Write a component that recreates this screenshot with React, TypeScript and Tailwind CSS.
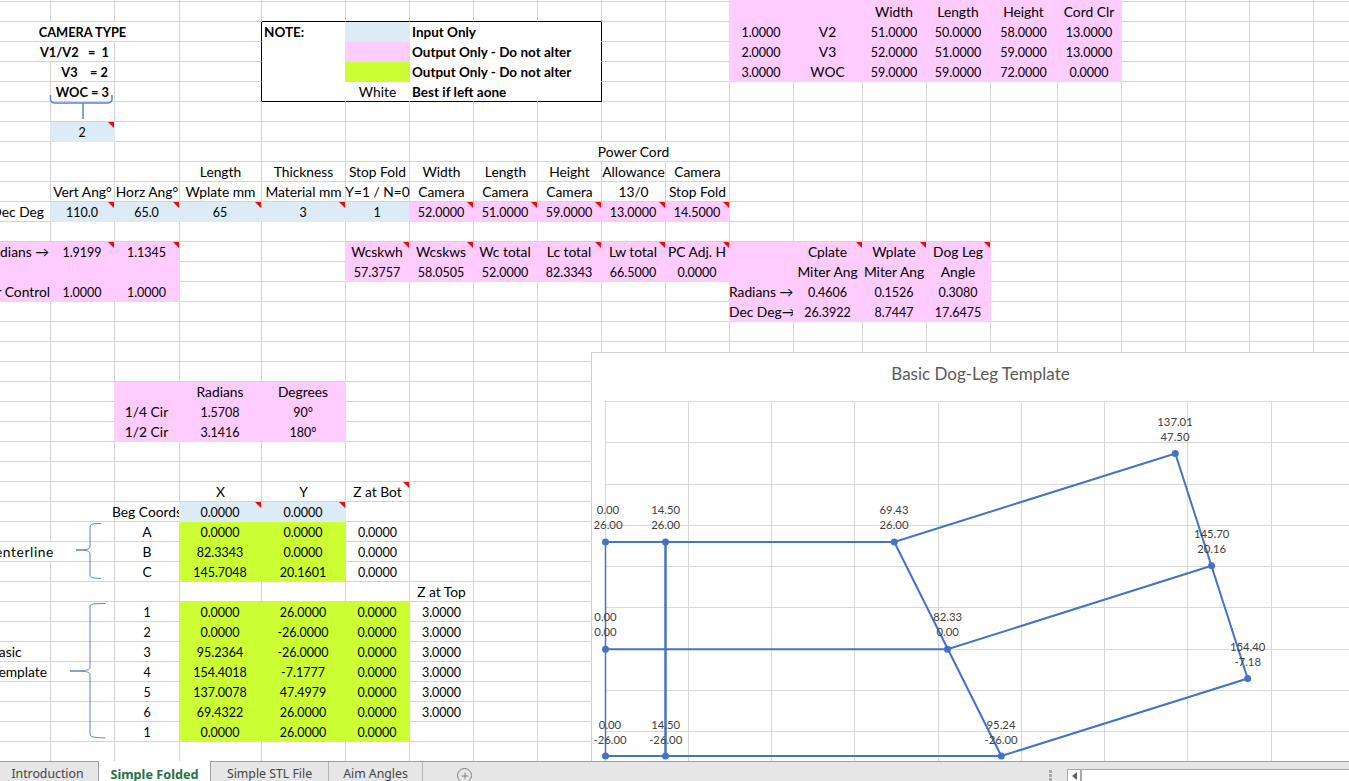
import { Plus } from 'lucide-react';

type Fill = 'pink' | 'blue' | 'lime';
type Cell = { t?: string; fill?: Fill; tri?: boolean; cls?: string };

const fills: Record<Fill, string> = {
  pink: 'bg-[#ffccff] border-r-transparent border-b-transparent -ml-px',
  blue: 'bg-[#ddebf7] border-r-transparent border-b-transparent -ml-px',
  lime: 'bg-[#ccff33] border-r-transparent border-b-transparent -ml-px',
};

const COLS = 21;
const sheet: Record<string, Cell> = {};

// writes values left to right from (r, c), null leaves the cell blank but still gets the options
function put(r: number, c: number, vals: (string | null)[], opt: Omit<Cell, 't'> = {}) {
  vals.forEach((v, i) => {
    sheet[`${r}:${c + i}`] = { ...opt, t: v ?? undefined };
  });
}
function patch(r: number, c: number, opt: Cell) {
  sheet[`${r}:${c}`] = { ...sheet[`${r}:${c}`], ...opt };
}

// camera table, top right
put(-1, 11, [null, null, null, null, null, null], { fill: 'pink' });
put(0, 11, [null, null, 'Width', 'Length', 'Height', 'Cord Clr'], { fill: 'pink' });
put(1, 11, ['1.0000', 'V2', '51.0000', '50.0000', '58.0000', '13.0000'], { fill: 'pink' });
put(2, 11, ['2.0000', 'V3', '52.0000', '51.0000', '59.0000', '13.0000'], { fill: 'pink' });
put(3, 11, ['3.0000', 'WOC', '59.0000', '59.0000', '72.0000', '0.0000'], { fill: 'pink' });

// camera type
put(1, 1, ['CAMERA TYPE'], { cls: 'font-bold text-[12.8px]' });
patch(1, 0, { cls: 'border-r-transparent' });
patch(1, 1, { cls: 'font-bold text-[12.8px] border-r-transparent' });
patch(2, 0, { cls: 'border-r-transparent' });
put(2, 1, ['V1/V2   =  1'], { cls: 'font-bold text-[12.8px] justify-end pr-[5px]' });
put(3, 1, ['V3    = 2'], { cls: 'font-bold text-[12.8px] justify-end pr-[6px]' });
put(4, 1, ['WOC = 3'], { cls: 'font-bold text-[12.8px] justify-end pr-[5px]' });
put(6, 1, ['2'], { fill: 'blue', tri: true });

// note box, black outline sits on the neighbouring cells' borders
for (let c = 4; c <= 8; c++) {
  put(0, c, [null], { cls: 'border-b-black' });
  for (let r = 1; r <= 4; r++) {
    const bottom = r === 4 ? 'border-b-black' : 'border-b-transparent';
    const right = c === 8 ? 'border-r-black' : 'border-r-transparent';
    put(r, c, [null], { cls: `${bottom} ${right}` });
  }
}
for (let r = 1; r <= 4; r++) put(r, 3, [null], { cls: 'border-r-black' });
put(1, 4, ['NOTE:'], { cls: 'font-bold text-[13.5px] justify-start pl-[2px] border-b-transparent border-r-transparent' });
put(1, 5, [null], { fill: 'blue' });
put(2, 5, [null], { fill: 'pink' });
put(3, 5, [null], { fill: 'lime' });
put(4, 5, ['White'], { cls: 'border-b-black border-r-transparent' });
const noteText = ['Input Only', 'Output Only - Do not alter', 'Output Only - Do not alter', 'Best if left aone'];
noteText.forEach((t, i) => {
  const bottom = i === 3 ? 'border-b-black' : 'border-b-transparent';
  put(i + 1, 6, [t], { cls: `font-bold text-[13.5px] justify-start pl-[2px] border-r-transparent ${bottom}` });
});

// input headers
put(7, 8, [null, 'Power Cord'], { cls: 'border-r-transparent' });
put(8, 3, ['Length', 'Thickness', 'Stop Fold', 'Width', 'Length', 'Height']);
put(8, 9, ['Allowance']);
put(8, 10, ['Camera'], { cls: 'bg-white' });
put(9, 1, ['Vert Ang°', 'Horz Ang°', 'Wplate mm', 'Material mm', 'Y=1 / N=0', 'Camera', 'Camera', 'Camera', '13/0', 'Stop Fold']);
put(10, 0, ['Dec Deg'], { cls: 'justify-end pr-[6px]' });
put(10, 1, ['110.0', '65.0', '65', '3'], { fill: 'blue', tri: true });
put(10, 5, ['1'], { fill: 'blue' });
put(10, 6, ['52.0000', '51.0000', '59.0000', '13.0000', '14.5000'], { fill: 'pink', tri: true });

// angle block
put(12, 0, ['Radians →'], { fill: 'pink', cls: 'justify-end pr-[1px]' });
put(12, 1, ['1.9199', '1.1345'], { fill: 'pink', tri: true });
put(13, 0, [null, null, null], { fill: 'pink' });
put(14, 0, ['Power Control'], { fill: 'pink', cls: 'justify-end' });
put(14, 1, ['1.0000', '1.0000'], { fill: 'pink' });

put(12, 5, ['Wcskwh', 'Wcskws'], { fill: 'pink', tri: true });
put(12, 7, ['Wc total'], { fill: 'pink' });
put(12, 8, ['Lc total', 'Lw total', 'PC Adj. H'], { fill: 'pink', tri: true });
put(13, 5, ['57.3757', '58.0505', '52.0000', '82.3343', '66.5000', '0.0000'], { fill: 'pink' });

put(12, 11, [null], { fill: 'pink' });
put(12, 12, ['Cplate', 'Wplate', 'Dog Leg'], { fill: 'pink', tri: true });
put(13, 11, [null, 'Miter Ang', 'Miter Ang', 'Angle'], { fill: 'pink' });
put(14, 11, ['Radians →'], { fill: 'pink', cls: 'justify-start' });
put(14, 12, ['0.4606', '0.1526', '0.3080'], { fill: 'pink' });
put(15, 11, ['Dec Deg→'], { fill: 'pink', cls: 'justify-start' });
put(15, 12, ['26.3922', '8.7447', '17.6475'], { fill: 'pink' });

// circle table
put(19, 2, [null, 'Radians', 'Degrees'], { fill: 'pink' });
put(20, 2, ['1/4 Cir', '1.5708', '90°'], { fill: 'pink' });
put(21, 2, ['1/2 Cir', '3.1416', '180°'], { fill: 'pink' });

// coordinates
put(24, 3, ['X', 'Y']);
put(24, 5, ['Z at Bot'], { tri: true });
put(25, 2, ['Beg Coords']);
put(25, 3, ['0.0000', '0.0000'], { fill: 'blue', tri: true });
const center = [
  ['A', '0.0000', '0.0000', '0.0000'],
  ['B', '82.3343', '0.0000', '0.0000'],
  ['C', '145.7048', '20.1601', '0.0000'],
];
center.forEach((row, i) => {
  put(26 + i, 2, [row[0]]);
  put(26 + i, 3, [row[1], row[2]], { fill: 'lime' });
  put(26 + i, 5, [row[3]]);
});
put(27, 0, ['Centerline'], { cls: 'justify-end -mr-[4px] tracking-[0.6px] border-r-transparent' });
put(29, 6, ['Z at Top']);
const template = [
  ['1', '0.0000', '26.0000'],
  ['2', '0.0000', '-26.0000'],
  ['3', '95.2364', '-26.0000'],
  ['4', '154.4018', '-7.1777'],
  ['5', '137.0078', '47.4979'],
  ['6', '69.4322', '26.0000'],
  ['1', '0.0000', '26.0000'],
];
template.forEach((row, i) => {
  put(30 + i, 2, [row[0]]);
  put(30 + i, 3, [row[1], row[2], '0.0000'], { fill: 'lime' });
  if (i < 6) put(30 + i, 6, ['3.0000']);
});
put(32, 0, ['Basic'], { cls: 'justify-start -ml-[10px]' });
put(33, 0, ['Template'], { cls: 'justify-start -ml-[8px]' });

const rowIds = Array.from({ length: 39 }, (_, i) => i - 1);
const colIds = Array.from({ length: COLS }, (_, i) => i);

function SheetCell({ cell, r }: { cell?: Cell; r: number }) {
  // Lato's digits run wider than the sheet's, so plain numbers get a smaller size
  const numeric = cell?.t && /^-?[\d.]+°?$/.test(cell.t);
  const size = numeric ? 'pt-[3px] text-[12.5px]' : r >= 0 ? 'pt-[2px]' : '';
  return (
    <div
      className={`relative flex items-center justify-center whitespace-pre border-r border-b border-[#d4d4d4] ${size} ${cell?.fill ? fills[cell.fill] : ''} ${cell?.cls ?? ''}`}
    >
      {cell?.t}
      {cell?.tri && <span className="absolute top-0 right-0 border-t-[6px] border-l-[6px] border-t-[#ff0000] border-l-transparent" />}
    </div>
  );
}

const pts = [
  { x: 605.5, y: 542, a: '0.00', b: '26.00', lx: 608, ly: 510 },
  { x: 665.5, y: 542, a: '14.50', b: '26.00', lx: 665.7, ly: 510 },
  { x: 894.3, y: 542, a: '69.43', b: '26.00', lx: 894, ly: 510 },
  { x: 1175.3, y: 453.5, a: '137.01', b: '47.50', lx: 1175, ly: 422 },
  { x: 1211.6, y: 565.8, a: '145.70', b: '20.16', lx: 1211.7, ly: 534 },
  { x: 1247.7, y: 678.5, a: '154.40', b: '-7.18', lx: 1247.7, ly: 647 },
  { x: 1001.3, y: 756, a: '95.24', b: '-26.00', lx: 1001, ly: 725 },
  { x: 947.5, y: 649.3, a: '82.33', b: '0.00', lx: 947.7, ly: 617 },
  { x: 605.5, y: 649.3, a: '0.00', b: '0.00', lx: 605.5, ly: 617 },
  { x: 605.5, y: 756, a: '0.00', b: '-26.00', lx: 610, ly: 725 },
  { x: 665.5, y: 756, a: '14.50', b: '-26.00', lx: 665.7, ly: 725 },
];
const gridX = [605.5, 688.5, 771.5, 854.5, 938.5, 1021.5, 1104.5, 1187.5, 1271.5];
const gridY = [401.5, 442.5, 484.5, 525.5, 566.5, 607.5, 649.5, 690.5, 731.5];

function Chart() {
  return (
    <div className="absolute left-[591px] top-[352px] right-0 bottom-0 border-l border-t border-[#d0d0d0] bg-white">
      <div className="pt-[9px] pl-[20px] text-center text-[17px] leading-6 text-[#595959]">Basic Dog-Leg Template</div>
      <svg className="absolute left-0 top-0" width="758" height="409" viewBox="592 353 758 409">
        {gridX.map((x) => (
          <line key={x} x1={x} x2={x} y1="401" y2="761" stroke="#d9d9d9" />
        ))}
        {gridY.map((y) => (
          <line key={y} x1="605" x2="1350" y1={y} y2={y} stroke="#d9d9d9" />
        ))}
        <g fill="none" stroke="#4472c4" strokeWidth="2">
          <path d="M605.5 756V542" strokeWidth="1.5" />
          <path d="M605.5 542H894.3L1175.3 453.5L1247.7 678.5L1001.3 756H605.5" />
          <path d="M665.5 542V756" strokeWidth="2.5" />
          <path d="M605.5 649.3H947.5L1211.6 565.8" />
          <path d="M894.3 542L1001.3 756" />
        </g>
        {pts.map((p) => (
          <circle key={p.a + p.b} cx={p.x} cy={p.y} r="3.5" fill="#4472c4" />
        ))}
        <g fill="#404040" fontSize="11.3" textAnchor="middle">
          {pts.map((p) => (
            <text key={p.a + p.b} x={p.lx} y={p.ly + 4}>
              <tspan x={p.lx}>{p.a}</tspan>
              <tspan x={p.lx} dy="15">{p.b}</tspan>
            </text>
          ))}
        </g>
      </svg>
    </div>
  );
}

function Braces() {
  return (
    <svg className="absolute left-0 top-0 pointer-events-none" width="120" height="761" fill="none" stroke="#5b84c6">
      <path strokeWidth="1.5" d="M50.5 95V99C50.5 102 52 103 55 103H107C110 103 112 102 112 99V95M83 103V119" />
      <path d="M101 523.5C93 523.5 90 524 90 527V546C90 549 88 550 76 550C88 550 90 551 90 554V575C90 578 93 578 101 578.5" />
      <path d="M105.5 603.5C93 603.5 90 604 90 607V667C90 670 88 671 70 671C88 671 90 672 90 675V734C90 737 93 737.5 105.5 738" />
    </svg>
  );
}

export default function App() {
  return (
    <div className="flex h-[781px] w-full flex-col overflow-hidden bg-white font-[Lato,sans-serif] text-[13.8px] text-black">
      <div className="relative h-[761px] overflow-hidden">
        <div className="grid grid-cols-[51px_64px_65px_82px_84px_64px_64px_64px_64px_64px_64px_64px_69px_64px_64px_67px_64px_64px_64px_64px_36px] grid-rows-[2px_repeat(38,20px)]">
          {rowIds.map((r) =>
            colIds.map((c) => <SheetCell key={`${r}:${c}`} r={r} cell={sheet[`${r}:${c}`]} />),
          )}
        </div>
        <Braces />
        <Chart />
      </div>
      <div className="relative flex h-5 items-stretch border-t border-[#a0a0a0] bg-[#e6e6e6] font-['Noto_Sans',sans-serif] text-[12.3px] leading-[18px] text-[#444444]">
        <div className="flex w-[99px] justify-center border-r border-[#a0a0a0] pt-[3px] pr-[3px]">Introduction</div>
        <div className="-mt-px flex w-[112px] justify-center border-r border-[#a0a0a0] bg-white pt-[4px] text-[12.7px] font-bold text-[#217346]">Simple Folded</div>
        <div className="flex w-[118px] justify-center border-r border-[#b4b4b4] pt-[3px]">Simple STL File</div>
        <div className="flex w-[94px] justify-center border-r border-[#b4b4b4] pt-[3px]">Aim Angles</div>
        <div className="ml-[34px] mt-[6px] flex h-[15px] w-[15px] items-center justify-center rounded-full border border-[#808080]">
          <Plus size={10} strokeWidth={1.5} className="text-[#505050]" />
        </div>
        <div className="ml-auto mr-[15px] mt-[8px] flex h-[11px] w-[3px] flex-col justify-between">
          <span className="h-[3px] w-[3px] bg-[#a8a8a8]" />
          <span className="h-[3px] w-[3px] bg-[#a8a8a8]" />
          <span className="h-[3px] w-[3px] bg-[#a8a8a8]" />
        </div>
        <div className="mt-[7px] flex w-[282px] border-t border-l border-[#a8a8a8] bg-white">
          <div className="flex w-[14px] items-center justify-center border-r-2 border-[#a8a8a8]">
            <span className="border-y-[4px] border-r-[5px] border-y-transparent border-r-[#606060]" />
          </div>
        </div>
      </div>
    </div>
  );
}
